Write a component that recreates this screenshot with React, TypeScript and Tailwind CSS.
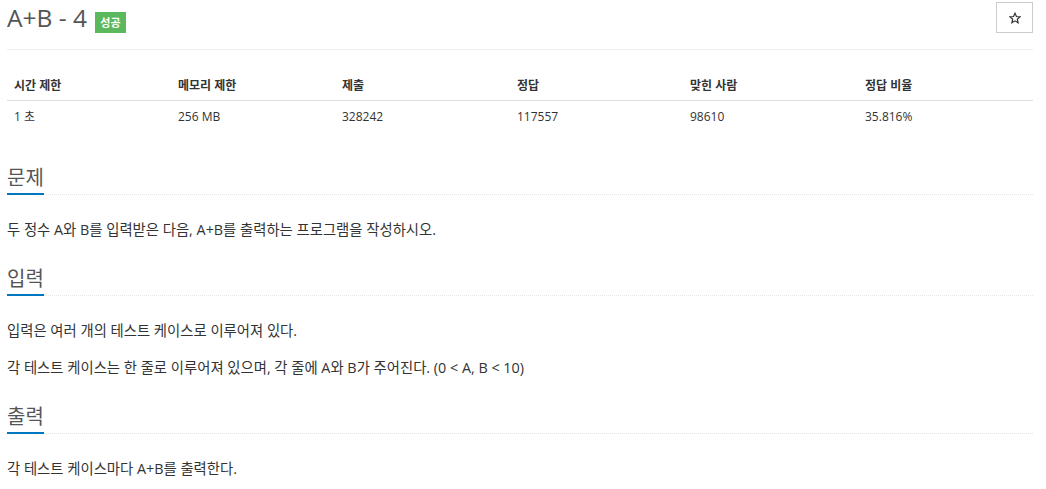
import React from "react";

const font = { fontFamily: '"Open Sans", "Noto Sans CJK KR", sans-serif' };

const cols = [
  { h: "시간 제한", v: "1 초", w: "w-[164px]" },
  { h: "메모리 제한", v: "256 MB", w: "w-[164px]" },
  { h: "제출", v: "328242", w: "w-[175px]" },
  { h: "정답", v: "117557", w: "w-[173px]" },
  { h: "맞힌 사람", v: "98610", w: "w-[175px]" },
  { h: "정답 비율", v: "35.816%", w: "flex-1" },
];

function Heading({ children }: { children: React.ReactNode }) {
  return (
    <div className="border-b border-dotted border-[#e5e5e5] h-[30px] flex items-end">
      <span className="text-[20px] leading-[30px] text-[#555] border-b-2 border-[#0076c0] -mb-[1px]">
        {children}
      </span>
    </div>
  );
}

export default function App() {
  return (
    <div className="bg-white w-[1046px] h-[489px] overflow-hidden" style={font}>
      <div className="px-[7px] w-[1040px]">
        <div className="h-[50px] border-b border-[#eee] pt-[2px] flex items-start justify-between">
          <div className="flex items-start">
            <span className="text-[24.5px] leading-[32px] text-[#555] font-normal">A+B - 4</span>
            <span className="ml-[8px] mt-[10px] h-[21px] w-[31px] text-center bg-[#5cb85c] text-white text-[11px] font-bold leading-[21px]">
              성공
            </span>
          </div>
          <button className="w-[37px] h-[31px] border border-[#ccc] bg-white flex items-center justify-center">
            <svg width="12" height="12" viewBox="0 0 24 24" fill="none" stroke="#333" strokeWidth="2.4" strokeLinejoin="miter">
              <path d="M12 2.5l2.9 6.6 7.1.6-5.4 4.7 1.6 7-6.2-3.7-6.2 3.7 1.6-7L2 9.7l7.1-.6z" />
            </svg>
          </button>
        </div>

        <div className="mt-[22px] text-[12px] text-[#333]">
          <div className="flex h-[29px] items-center border-b border-[#ddd] font-bold">
            {cols.map((c) => (
              <div key={c.h} className={`${c.w} pl-[7px]`}>{c.h}</div>
            ))}
          </div>
          <div className="flex h-[32px] items-center">
            {cols.map((c) => (
              <div key={c.h} className={`${c.w} pl-[7px]`}>{c.v}</div>
            ))}
          </div>
        </div>

        <div className="mt-[32px]">
          <Heading>문제</Heading>
          <p className="mt-[24px] text-[14.35px] leading-[22px] text-[#333]">
            두 정수 A와 B를 입력받은 다음, A+B를 출력하는 프로그램을 작성하시오.
          </p>
        </div>

        <div className="mt-[25px]">
          <Heading>입력</Heading>
          <p className="mt-[24px] text-[14.35px] leading-[22px] text-[#333]">
            입력은 여러 개의 테스트 케이스로 이루어져 있다.
          </p>
          <p className="mt-[15px] text-[14.35px] leading-[22px] text-[#333]">
            각 테스트 케이스는 한 줄로 이루어져 있으며, 각 줄에 A와 B가 주어진다. (0 &lt; A, B &lt; 10)
          </p>
        </div>

        <div className="mt-[25px]">
          <Heading>출력</Heading>
          <p className="mt-[24px] text-[14.35px] leading-[22px] text-[#333]">
            각 테스트 케이스마다 A+B를 출력한다.
          </p>
        </div>
      </div>
    </div>
  );
}
